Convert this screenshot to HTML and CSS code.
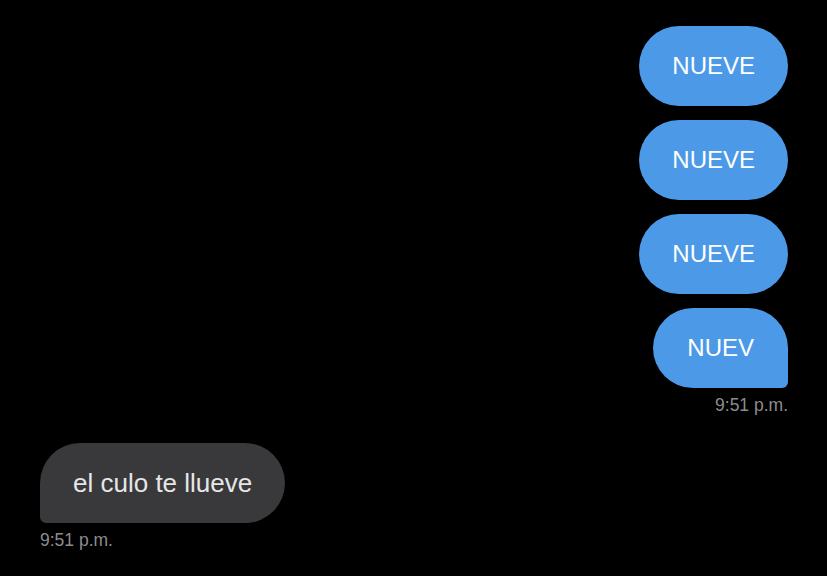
FILE: index.html
```html
<!DOCTYPE html>
<html lang="es">

<head>
    <meta charset="UTF-8">
    <meta name="viewport" content="width=device-width, initial-scale=1.0">
    <title>Chat</title>
    <link rel="stylesheet" href="styles.css">
</head>

<body>
    <div class="chat">
        <div class="group sent">
            <div class="bubble">NUEVE</div>
            <div class="bubble">NUEVE</div>
            <div class="bubble">NUEVE</div>
            <div class="bubble last">NUEV</div>
            <div class="time">9:51 p.m.</div>
        </div>
        <div class="group received">
            <div class="bubble last">el culo te llueve</div>
            <div class="time">9:51 p.m.</div>
        </div>
    </div>
</body>

</html>
```

FILE: styles.css
```css
body {
    margin: 0;
    background-color: #000;
    font-family: 'Liberation Sans', Arial, sans-serif;
    height: 576px;
    overflow: hidden;
}

.chat {
    display: flex;
    flex-direction: column;
    padding: 26px 39px 0 40px;
}

.group {
    display: flex;
    flex-direction: column;
    gap: 14px;
}

.sent {
    align-items: flex-end;
}

.received {
    align-items: flex-start;
    margin-top: 27px;
}

.bubble {
    height: 80px;
    line-height: 80px;
    padding: 0 33px;
    border-radius: 40px;
    font-size: 24px;
    box-sizing: border-box;
}

.sent .bubble {
    background-color: #4b99e7;
    color: #fff;
}

.sent .bubble.last {
    padding: 0 34px;
    border-bottom-right-radius: 6px;
}

.received .bubble {
    background-color: #39393c;
    color: #e6e6e6;
    font-size: 26px;
}

.received .bubble.last {
    border-bottom-left-radius: 6px;
}

.time {
    color: #8c8c90;
    font-size: 17.5px;
    margin-top: -7px;
}
```
